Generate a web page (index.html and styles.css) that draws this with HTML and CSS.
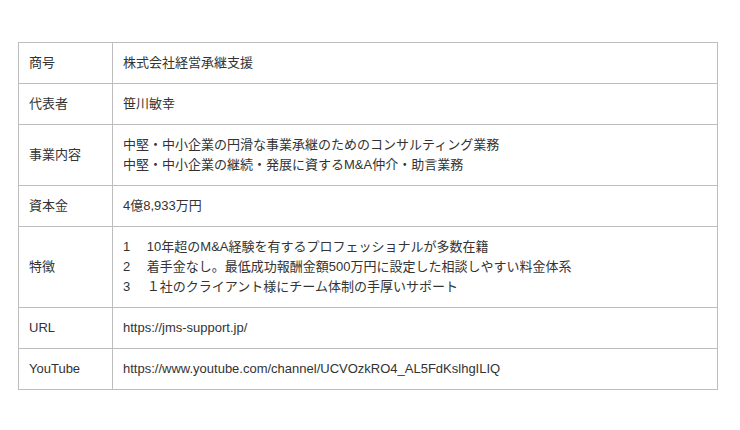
FILE: index.html
```html
<!DOCTYPE html>
<html lang="ja">
<head>
<meta charset="utf-8">
<title>会社概要</title>
<link rel="stylesheet" href="styles.css">
</head>
<body>
<div class="page">
  <table class="info">
    <colgroup><col class="col-label"><col class="col-value"></colgroup>
    <tbody>
      <tr><th>商号</th><td>株式会社経営承継支援</td></tr>
      <tr><th>代表者</th><td>笹川敏幸</td></tr>
      <tr><th>事業内容</th><td>中堅・中小企業の円滑な事業承継のためのコンサルティング業務<br>中堅・中小企業の継続・発展に資するM&amp;A仲介・助言業務</td></tr>
      <tr><th>資本金</th><td>4億8,933万円</td></tr>
      <tr><th>特徴</th><td>1&nbsp;　10年超のM&amp;A経験を有するプロフェッショナルが多数在籍<br>2&nbsp;　着手金なし。最低成功報酬金額500万円に設定した相談しやすい料金体系<br>3&nbsp;　１社のクライアント様にチーム体制の手厚いサポート</td></tr>
      <tr><th>URL</th><td>https://jms-support.jp/</td></tr>
      <tr><th>YouTube</th><td>https://www.youtube.com/channel/UCVOzkRO4_AL5FdKslhgILIQ</td></tr>
    </tbody>
  </table>
</div>
</body>
</html>
```
FILE: styles.css
```css
html, body {
  margin: 0;
  padding: 0;
  background: #ffffff;
}
.page {
  padding: 42px 0 0 18px;
}
.info {
  border-collapse: collapse;
  width: 700px;
  table-layout: fixed;
  font-family: "Liberation Sans", "Noto Sans CJK JP", sans-serif;
  font-size: 13px;
  line-height: 20px;
  color: #333333;
}
.col-label { width: 94px; }
.info th, .info td {
  border: 1px solid #bdbdbd;
  padding: 10px 10px;
  text-align: left;
  font-weight: normal;
  vertical-align: middle;
  white-space: nowrap;
}
```
